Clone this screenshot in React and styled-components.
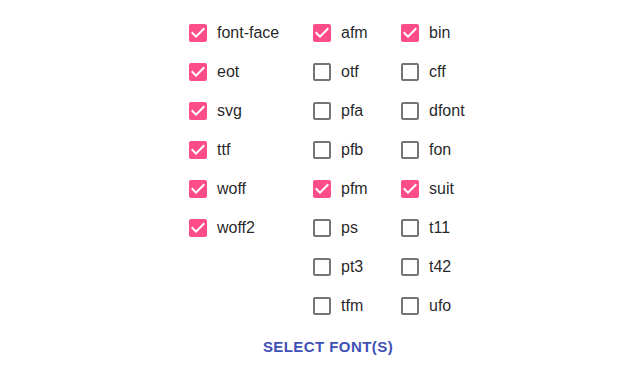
import React from "react";
import styled, { createGlobalStyle } from "styled-components";

const columns = [
  [
    { name: "font-face", checked: true },
    { name: "eot", checked: true },
    { name: "svg", checked: true },
    { name: "ttf", checked: true },
    { name: "woff", checked: true },
    { name: "woff2", checked: true },
  ],
  [
    { name: "afm", checked: true },
    { name: "otf", checked: false },
    { name: "pfa", checked: false },
    { name: "pfb", checked: false },
    { name: "pfm", checked: true },
    { name: "ps", checked: false },
    { name: "pt3", checked: false },
    { name: "tfm", checked: false },
  ],
  [
    { name: "bin", checked: true },
    { name: "cff", checked: false },
    { name: "dfont", checked: false },
    { name: "fon", checked: false },
    { name: "suit", checked: true },
    { name: "t11", checked: false },
    { name: "t42", checked: false },
    { name: "ufo", checked: false },
  ],
];

const widths = [124, 88, 72];

const CheckIcon = ({ checked }) =>
  checked ? (
    <svg width="24" height="24" viewBox="0 0 24 24">
      <path
        fill="#ff4d89"
        d="M19 3H5c-1.11 0-2 .9-2 2v14c0 1.1.89 2 2 2h14c1.11 0 2-.9 2-2V5c0-1.1-.89-2-2-2zm-9 14l-5-5 1.41-1.41L10 14.17l7.59-7.59L19 8l-9 9z"
      />
    </svg>
  ) : (
    <svg width="24" height="24" viewBox="0 0 24 24">
      <path
        fill="rgba(0,0,0,0.54)"
        d="M19 5v14H5V5h14m0-2H5c-1.1 0-2 .9-2 2v14c0 1.1.9 2 2 2h14c1.1 0 2-.9 2-2V5c0-1.1-.9-2-2-2z"
      />
    </svg>
  );

const App = () => {
  return (
    <>
      <GlobalStyle />
      <Page>
        <Grid>
          {columns.map((col, i) => (
            <Column key={i} width={widths[i]}>
              {col.map((item) => (
                <Option key={item.name}>
                  <Box>
                    <CheckIcon checked={item.checked} />
                  </Box>
                  <Label>{item.name}</Label>
                </Option>
              ))}
            </Column>
          ))}
        </Grid>
        <SelectButton>Select font(s)</SelectButton>
      </Page>
    </>
  );
};

const GlobalStyle = createGlobalStyle`
  body {
    margin: 0;
    background: #fff;
    font-family: "Liberation Sans", Arial, sans-serif;
  }
`;

const Page = styled.div`
  width: 640px;
  height: 376px;
  box-sizing: border-box;
  padding: 13px 0 0 16px;
  display: flex;
  flex-direction: column;
  align-items: center;
`;

const Grid = styled.div`
  display: flex;
  align-items: flex-start;
`;

const Column = styled.div`
  width: ${(p) => p.width}px;
  display: flex;
  flex-direction: column;
`;

const Option = styled.label`
  height: 39px;
  display: flex;
  align-items: center;
  cursor: pointer;
`;

const Box = styled.span`
  width: 24px;
  height: 24px;
  margin-right: 7px;
  display: flex;

  svg {
    display: block;
  }
`;

const Label = styled.span`
  font-size: 16px;
  color: rgba(0, 0, 0, 0.87);
  white-space: nowrap;
`;

const SelectButton = styled.button`
  margin-top: 3px;
  padding: 6px 8px;
  border: none;
  background: none;
  color: #3f51b5;
  font-family: "Liberation Sans", Arial, sans-serif;
  font-size: 15px;
  font-weight: 700;
  letter-spacing: 0.02857em;
  line-height: 1.75;
  text-transform: uppercase;
  cursor: pointer;
`;

export default App;
